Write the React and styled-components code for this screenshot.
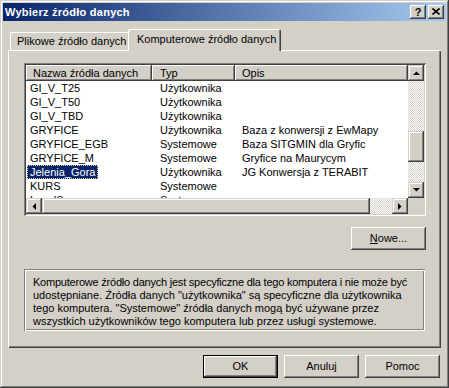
import React from 'react'
import styled, { createGlobalStyle } from 'styled-components'

const GlobalStyle = createGlobalStyle`
  html, body {
    margin: 0;
    padding: 0;
    background: #d4d0c8;
  }
  body {
    font-family: "Liberation Sans", Arial, sans-serif;
    font-size: 11px;
    color: #000;
  }
`

const face = '#d4d0c8'
const raised = `inset -1px -1px #404040, inset 1px 1px #fff, inset -2px -2px #808080`
const sunken = `inset 1px 1px #808080, inset -1px -1px #fff, inset 2px 2px #404040, inset -2px -2px ${face}`
const dither = `repeating-conic-gradient(${face} 0% 25%, #fff 0% 50%) 0 0 / 2px 2px`

const Window = styled.div`
  width: 449px;
  height: 388px;
  box-sizing: border-box;
  padding: 3px;
  background: ${face};
  box-shadow: inset -1px -1px #404040, inset 1px 1px ${face}, inset -2px -2px #808080, inset 2px 2px #fff;
  display: flex;
  flex-direction: column;
`

const TitleBar = styled.div`
  height: 18px;
  margin-bottom: 1px;
  background: linear-gradient(to right, #0a246a, #a6caf0);
  display: flex;
  align-items: center;
  justify-content: space-between;
  padding: 0 2px 0 2px;
`

const Title = styled.span`
  color: #fff;
  font-weight: bold;
  font-size: 11px;
  letter-spacing: 0.25px;
`

const CaptionButtons = styled.div`
  display: flex;
  gap: 2px;
`

const CaptionButton = styled.div`
  width: 16px;
  height: 14px;
  box-sizing: border-box;
  background: ${face};
  box-shadow: inset -1px -1px #404040, inset 1px 1px #fff, inset -2px -2px #808080;
  display: flex;
  align-items: center;
  justify-content: center;
  font-weight: bold;
  font-size: 11px;
  line-height: 14px;
  padding-bottom: 1px;
`

const Client = styled.div`
  flex: 1;
  display: flex;
  flex-direction: column;
  padding: 7px 5px 7px 5px;
`

const TabStrip = styled.div`
  height: 21px;
  display: flex;
  align-items: flex-end;
  padding-left: 2px;
`

const Tab = styled.div`
  box-sizing: border-box;
  height: ${p => (p.$active ? '22px' : '18px')};
  width: ${p => p.$w}px;
  margin-left: ${p => (p.$active ? '-2px' : '0')};
  margin-bottom: ${p => (p.$active ? '-1px' : '0')};
  position: ${p => (p.$active ? 'relative' : 'static')};
  z-index: ${p => (p.$active ? 1 : 0)};
  background: ${face};
  box-shadow: inset 1px 1px #fff, inset -1px 0 #404040, inset -2px 0 #808080;
  border-radius: 2px 2px 0 0;
  display: flex;
  align-items: center;
  padding-left: ${p => p.$pad}px;
  padding-bottom: ${p => (p.$active ? '3px' : '0')};
  white-space: nowrap;
`

const TabPanel = styled.div`
  height: 298px;
  box-sizing: border-box;
  box-shadow: inset 1px 1px #fff, inset -1px -1px #404040, inset -2px -2px #808080;
  padding: 13px 15px 0 16px;
  display: flex;
  flex-direction: column;
`

const ListView = styled.div`
  height: 153px;
  box-sizing: border-box;
  padding: 2px;
  background: #fff;
  box-shadow: ${sunken};
  display: grid;
  grid-template-columns: 1fr 16px;
  grid-template-rows: 1fr 16px;
`

const ListMain = styled.div`
  display: flex;
  flex-direction: column;
  overflow: hidden;
`

const cols = '126px 83px 1fr'

const HeaderRow = styled.div`
  height: 16px;
  flex: none;
  display: grid;
  grid-template-columns: ${cols};
  background: ${face};
`

const HeaderCell = styled.div`
  box-shadow: ${raised};
  padding-left: ${p => p.$pad}px;
  line-height: 16px;
  white-space: nowrap;
  overflow: hidden;
`

const Rows = styled.div`
  flex: 1;
  overflow: hidden;
`

const Row = styled.div`
  height: 14px;
  line-height: 14px;
  display: grid;
  grid-template-columns: ${cols};
  white-space: nowrap;
`

const Cell = styled.div`
  padding-left: ${p => p.$pad}px;
  overflow: hidden;
`

const Label = styled.span`
  display: inline-block;
  padding: 0 3px;
  margin-left: 1px;
  height: 14px;
  box-sizing: border-box;
  background: ${p => (p.$selected ? '#0a246a' : 'transparent')};
  color: ${p => (p.$selected ? '#fff' : '#000')};
  outline: ${p => (p.$selected ? '1px dotted #d8d4a0' : 'none')};
  outline-offset: -1px;
`

const VScroll = styled.div`
  display: flex;
  flex-direction: column;
`

const HScroll = styled.div`
  display: flex;
`

const ArrowButton = styled.div`
  width: 16px;
  height: 16px;
  flex: none;
  box-sizing: border-box;
  background: ${face};
  box-shadow: inset -1px -1px #404040, inset 1px 1px ${face}, inset -2px -2px #808080, inset 2px 2px #fff;
  display: flex;
  align-items: center;
  justify-content: center;
`

const Track = styled.div`
  flex: 1;
  display: flex;
  flex-direction: ${p => (p.$vertical ? 'column' : 'row')};
  background: ${dither};
`

const Thumb = styled.div`
  flex: none;
  box-sizing: border-box;
  width: ${p => (p.$vertical ? '16px' : `${p.$size}px`)};
  height: ${p => (p.$vertical ? `${p.$size}px` : '16px')};
  margin-top: ${p => (p.$vertical ? `${p.$offset}px` : '0')};
  margin-left: ${p => (p.$vertical ? '0' : `${p.$offset}px`)};
  background: ${face};
  box-shadow: inset -1px -1px #404040, inset 1px 1px ${face}, inset -2px -2px #808080, inset 2px 2px #fff;
`

const Corner = styled.div`
  background: ${face};
`

const NewButton = styled.div`
  align-self: flex-end;
  margin-top: 11px;
`

const Button = styled.div`
  width: 75px;
  height: 23px;
  box-sizing: border-box;
  background: ${face};
  box-shadow: ${p =>
    p.$default
      ? 'inset 0 0 0 1px #000, inset -2px -2px #404040, inset 2px 2px #fff, inset -3px -3px #808080'
      : raised};
  display: flex;
  align-items: center;
  justify-content: center;
  padding-bottom: 1px;
  u {
    text-decoration: underline;
  }
`

const InfoBox = styled.div`
  margin-top: 19px;
  margin-right: 1px;
  height: 62px;
  box-sizing: border-box;
  box-shadow: inset 1px 1px #808080, inset -1px -1px #fff, inset 2px 2px #fff, inset -2px -2px #808080;
  padding: 7px 0 0 9px;
  line-height: 13px;
  white-space: nowrap;
`

const InfoLine = styled.div`
  letter-spacing: ${p => p.$spacing || 0}px;
`

const ButtonRow = styled.div`
  margin-top: 7px;
  display: flex;
  justify-content: flex-end;
  gap: 6px;
  padding-right: 1px;
`

const Arrow = ({ dir }) => {
  const pts = {
    up: '0,4 7,4 3.5,0.5',
    down: '0,0 7,0 3.5,3.5',
    left: '4,0 4,7 0.5,3.5',
    right: '0,0 0,7 3.5,3.5',
  }[dir]
  const vertical = dir === 'up' || dir === 'down'
  return (
    <svg width={vertical ? 7 : 4} height={vertical ? 4 : 7} viewBox={vertical ? '0 0 7 4' : '0 0 4 7'}>
      <polygon points={pts} fill="#000" />
    </svg>
  )
}

const sources = [
  ['GI_V_T25', 'Użytkownika', ''],
  ['GI_V_T50', 'Użytkownika', ''],
  ['GI_V_TBD', 'Użytkownika', ''],
  ['GRYFICE', 'Użytkownika', 'Baza z konwersji z EwMapy'],
  ['GRYFICE_EGB', 'Systemowe', 'Baza SITGMIN dla Gryfic'],
  ['GRYFICE_M', 'Systemowe', 'Gryfice na Maurycym'],
  ['Jelenia_Gora', 'Użytkownika', 'JG Konwersja z TERABIT'],
  ['KURS', 'Systemowe', ''],
  ['LocalServer', 'Systemowe', ''],
]

const App = () => {
  const selected = 'Jelenia_Gora'

  return (
    <>
      <GlobalStyle />
      <Window>
        <TitleBar>
          <Title>Wybierz źródło danych</Title>
          <CaptionButtons>
            <CaptionButton>?</CaptionButton>
            <CaptionButton>
              <svg width="8" height="7" viewBox="0 0 8 7">
                <path d="M0.5 0.5 L7.5 6.5 M7.5 0.5 L0.5 6.5" stroke="#000" strokeWidth="1.6" />
              </svg>
            </CaptionButton>
          </CaptionButtons>
        </TitleBar>
        <Client>
          <TabStrip>
            <Tab $w={120} $pad={7}>Plikowe źródło danych</Tab>
            <Tab $active $w={153} $pad={9}>Komputerowe źródło danych</Tab>
          </TabStrip>
          <TabPanel>
            <ListView>
              <ListMain>
                <HeaderRow>
                  <HeaderCell $pad={7}>Nazwa źródła danych</HeaderCell>
                  <HeaderCell $pad={8}>Typ</HeaderCell>
                  <HeaderCell $pad={7}>Opis</HeaderCell>
                </HeaderRow>
                <Rows>
                  {sources.map(([name, type, desc]) => (
                    <Row key={name}>
                      <Cell $pad={0}>
                        <Label $selected={name === selected}>{name}</Label>
                      </Cell>
                      <Cell $pad={8}>{type}</Cell>
                      <Cell $pad={7}>{desc}</Cell>
                    </Row>
                  ))}
                </Rows>
              </ListMain>
              <VScroll>
                <ArrowButton><Arrow dir="up" /></ArrowButton>
                <Track $vertical>
                  <Thumb $vertical $offset={50} $size={31} />
                </Track>
                <ArrowButton><Arrow dir="down" /></ArrowButton>
              </VScroll>
              <HScroll>
                <ArrowButton><Arrow dir="left" /></ArrowButton>
                <Track>
                  <Thumb $offset={0} $size={328} />
                </Track>
                <ArrowButton><Arrow dir="right" /></ArrowButton>
              </HScroll>
              <Corner />
            </ListView>
            <NewButton>
              <Button><span><u>N</u>owe...</span></Button>
            </NewButton>
            <InfoBox>
              <InfoLine $spacing={-0.22}>Komputerowe źródło danych jest specyficzne dla tego komputera i nie może być</InfoLine>
              <InfoLine>udostępniane. Źródła danych "użytkownika" są specyficzne dla użytkownika</InfoLine>
              <InfoLine>tego komputera. "Systemowe" źródła danych mogą być używane przez</InfoLine>
              <InfoLine>wszystkich użytkowników tego komputera lub przez usługi systemowe.</InfoLine>
            </InfoBox>
          </TabPanel>
          <ButtonRow>
            <Button $default>OK</Button>
            <Button>Anuluj</Button>
            <Button>Pomoc</Button>
          </ButtonRow>
        </Client>
      </Window>
    </>
  )
}

export default App
